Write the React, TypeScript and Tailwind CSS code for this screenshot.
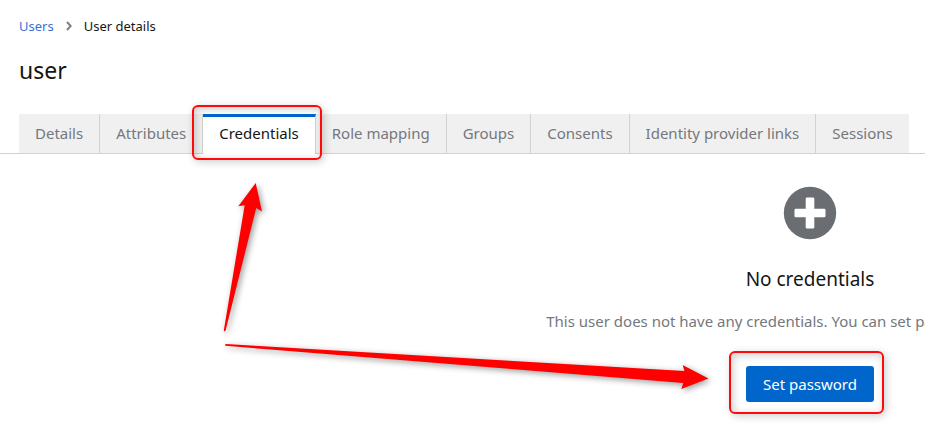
const tabs = [
  "Details",
  "Attributes",
  "Credentials",
  "Role mapping",
  "Groups",
  "Consents",
  "Identity provider links",
  "Sessions",
];

function Highlight({ className }: { className: string }) {
  return (
    <div
      aria-hidden="true"
      className={
        "pointer-events-none absolute z-10 rounded-md border-2 border-[#ff0a0a] shadow-[2px_2px_8px_rgba(0,0,0,0.2),inset_2px_2px_8px_rgba(0,0,0,0.2)] " +
        className
      }
    />
  );
}

function Arrows() {
  return (
    <svg
      aria-hidden="true"
      className="pointer-events-none absolute top-0 left-0 z-20 drop-shadow-[2px_2px_3px_rgba(0,0,0,0.4)]"
      width="925"
      height="433"
      viewBox="0 0 925 433"
      fill="#ff0000"
    >
      <path d="M255.7 183 L262 211.5 L256.2 208 L225.6 330.5 Q224.5 332 223.8 330.5 L244.7 205.3 L238.3 206.3 Z" />
      <path d="M708.5 378.5 L681.3 389 L683.3 383 L225.5 345.8 Q224.5 344.8 225.8 344 L684.5 371 L682.6 365 Z" />
    </svg>
  );
}

export default function App() {
  return (
    <div className="relative min-h-screen overflow-hidden bg-white font-['Noto_Sans',sans-serif] text-[15px] leading-6 text-[#74787d]">
      <header className="px-[19px] pt-4">
        <nav aria-label="Breadcrumb">
          <ol className="flex items-center text-[13px] leading-5 text-[#151515]">
            <li>
              <a href="#users" className="text-[#3b6fd4]">
                Users
              </a>
            </li>
            <li aria-hidden="true" className="px-3">
              <svg width="6" height="10" viewBox="0 0 6 10" fill="none" stroke="#7d8084" strokeWidth="2">
                <path d="M1 1 L4.7 5 L1 9" />
              </svg>
            </li>
            <li aria-current="page">User details</li>
          </ol>
        </nav>
        <h1 className="mt-[18px] text-[23px] leading-8 text-[#151515]">user</h1>
      </header>

      <div role="tablist" className="mt-7 flex h-10 border-b border-[#d2d2d2] pl-[19px]">
        {tabs.map((tab, i) => {
          const active = tab === "Credentials";
          return (
            <div key={tab} className="relative -mb-px flex shrink-0">
              <button
                type="button"
                role="tab"
                aria-selected={active}
                className={
                  "px-4 whitespace-nowrap " +
                  (active
                    ? "border-t-[3px] border-r border-t-[#0066cc] border-r-[#d2d2d2] bg-white pb-[5px] text-[#151515]"
                    : i === tabs.length - 1
                      ? "border-b border-[#d2d2d2] bg-[#f0f0f0] pb-[2px]"
                      : "border-r border-b border-[#d2d2d2] bg-[#f0f0f0] pb-[2px]")
                }
              >
                {tab}
              </button>
              {active && <Highlight className="-top-[9px] -right-[6px] -bottom-[6px] -left-[11px]" />}
            </div>
          );
        })}
      </div>

      <main className="flex w-[1620px] flex-col items-center pt-8">
        <svg width="54" height="54" viewBox="0 0 54 54" aria-hidden="true">
          <circle cx="27" cy="27" r="26.2" fill="#6a6e73" />
          <path
            d="M24 11.5h6a1.3 1.3 0 0 1 1.3 1.3v9.9h9.9a1.3 1.3 0 0 1 1.3 1.3v6a1.3 1.3 0 0 1-1.3 1.3h-9.9v9.9a1.3 1.3 0 0 1-1.3 1.3h-6a1.3 1.3 0 0 1-1.3-1.3v-9.9h-9.9a1.3 1.3 0 0 1-1.3-1.3v-6a1.3 1.3 0 0 1 1.3-1.3h9.9v-9.9a1.3 1.3 0 0 1 1.3-1.3z"
            fill="#fff"
          />
        </svg>
        <h2 className="mt-6 text-[19px] leading-[30px] text-[#151515]">No credentials</h2>
        <p className="mt-[15px] whitespace-nowrap">
          This user does not have any credentials. You can set password for this user.
        </p>
        <div className="relative mt-[33px] flex">
          <button type="button" className="h-9 rounded-[3px] bg-[#0066cc] px-[17px] text-white">
            Set password
          </button>
          <Highlight className="-top-[15px] -right-[10px] -bottom-[12px] -left-[17px]" />
        </div>
      </main>

      <Arrows />
    </div>
  );
}
